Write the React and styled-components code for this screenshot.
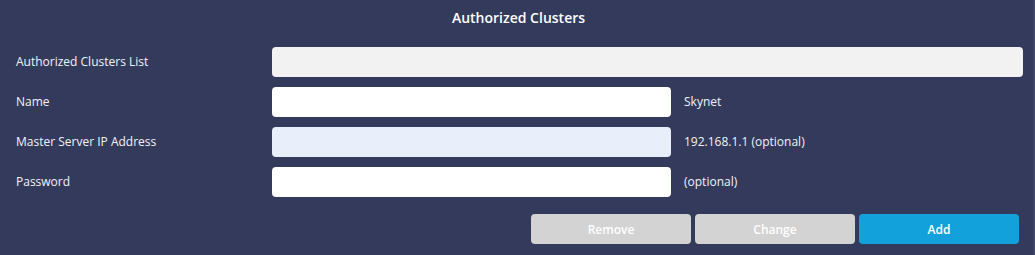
import React from 'react';
import styled, { createGlobalStyle } from 'styled-components';

const GlobalStyle = createGlobalStyle`
  html, body {
    margin: 0;
    padding: 0;
    background: #333a5c;
  }
  * { box-sizing: border-box; }
`;

const Panel = styled.div`
  width: 1035px;
  height: 255px;
  background-color: #333a5c;
  font-family: "Open Sans", "Noto Sans", sans-serif;
  color: #ffffff;
  padding: 0 12px 0 16px;
  border-right: 2px solid #3e4566;
`;

const Title = styled.h2`
  margin: 0;
  height: 35px;
  line-height: 35px;
  text-align: center;
  font-size: 14px;
  font-weight: 600;
`;

const Form = styled.div`
  display: flex;
  flex-direction: column;
  gap: 10px;
  margin-top: 12px;
`;

const Row = styled.div`
  display: grid;
  grid-template-columns: 256px ${p => (p.$wide ? '751px' : '399px 1fr')};
  align-items: center;
  height: 30px;
  line-height: 28px;
`;

const Label = styled.label`
  font-size: 12px;
  color: #f2f3f7;
`;

const Input = styled.input`
  height: 30px;
  width: 100%;
  border: none;
  border-radius: 4px;
  background-color: ${p => p.$bg || '#ffffff'};
  outline: none;
  font-family: inherit;
  font-size: 12px;
`;

const Hint = styled.span`
  font-size: 12px;
  padding-left: 13px;
  color: #f2f3f7;
`;

const Actions = styled.div`
  display: flex;
  justify-content: flex-end;
  gap: 4px;
  margin-top: 17px;
  padding-right: 2px;
`;

const Button = styled.button`
  width: 160px;
  height: 30px;
  border: none;
  border-radius: 4px;
  background-color: ${p => (p.$primary ? '#13a1dc' : '#d3d3d3')};
  color: #ffffff;
  font-family: inherit;
  font-size: 12px;
  font-weight: 600;
  cursor: pointer;
`;

const fields = [
  { label: 'Name', hint: 'Skynet' },
  { label: 'Master Server IP Address', hint: '192.168.1.1 (optional)', bg: '#e8effb' },
  { label: 'Password', hint: '(optional)', type: 'password' },
];

export default function App() {
  return (
    <>
      <GlobalStyle />
      <Panel>
        <Title>Authorized Clusters</Title>
        <Form>
          <Row $wide>
            <Label>Authorized Clusters List</Label>
            <Input $bg="#f2f2f2" readOnly />
          </Row>
          {fields.map(f => (
            <Row key={f.label}>
              <Label>{f.label}</Label>
              <Input type={f.type || 'text'} $bg={f.bg} />
              <Hint>{f.hint}</Hint>
            </Row>
          ))}
        </Form>
        <Actions>
          <Button>Remove</Button>
          <Button>Change</Button>
          <Button $primary>Add</Button>
        </Actions>
      </Panel>
    </>
  );
}
